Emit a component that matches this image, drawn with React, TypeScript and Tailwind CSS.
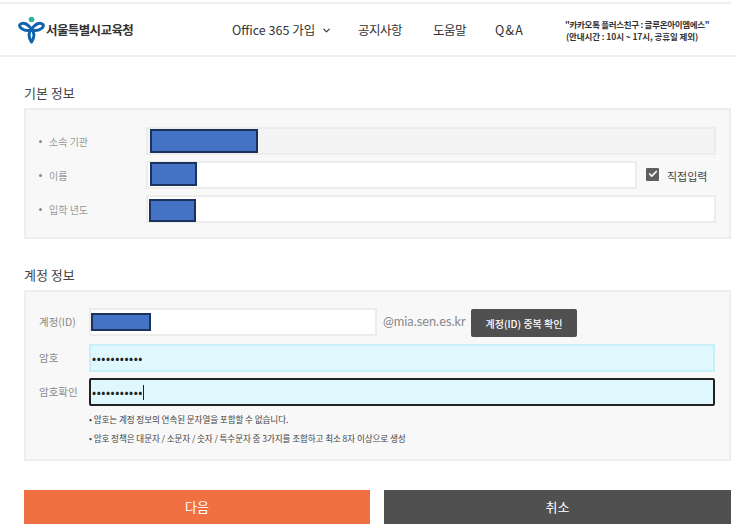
import { ChevronDown, Check } from 'lucide-react';

const KR = "font-['Noto_Sans_CJK_KR','Noto_Sans',sans-serif]";

const Redact = ({ className }: { className: string }) => (
  <div className={`bg-[#4472c4] border-2 border-[#1a325e] ${className}`}></div>
);

const Logo = () => (
  <svg width="27" height="28" viewBox="0 0 27 28" fill="none">
    <circle cx="13.5" cy="3.5" r="2.8" fill="#2bb5a0" />
    <path
      d="M2 8.5C5 5.5 10 8 13.5 13C17 8 22 5.5 25 8.5C26.5 11 22 15 16 14.5M13.5 13C10 16.5 10.5 22 13.5 26C16.5 22 17 16.5 13.5 13M2 8.5C0.5 11 5 15 11 14.5"
      stroke="#0f62ac"
      strokeWidth="3"
      strokeLinecap="round"
      strokeLinejoin="round"
    />
  </svg>
);

const BasicRow = ({ label, children }: { label: string; children: React.ReactNode }) => (
  <div className="flex items-center">
    <div className="w-[120px] pl-[13px] flex items-center text-[10px] text-[#999]">
      <span className="w-[3px] h-[3px] rounded-full bg-[#888] mr-[7px]"></span>
      {label}
    </div>
    {children}
  </div>
);

export default function App() {
  return (
    <div className={`w-[737px] h-[532px] bg-white overflow-hidden pt-[2px] ${KR}`}>
      <div className="h-[2px] bg-[#eeeeee] mr-[6px]"></div>

      <header className="h-[52px] mt-[1px] border-b-2 border-[#eeeeee] flex items-center">
        <div className="w-[232px] pl-[18px] flex items-center gap-[1px]">
          <Logo />
          <span className="text-[12.5px] font-bold text-[#333] tracking-[-0.6px] whitespace-nowrap">서울특별시교육청</span>
        </div>
        <nav className="flex items-center text-[12.5px] text-[#333] whitespace-nowrap">
          <span className="flex items-center w-[126px]">
            Office 365 가입
            <ChevronDown className="w-[11px] h-[11px] ml-[6px]" strokeWidth={2.5} />
          </span>
          <span className="w-[75px] tracking-[-0.5px]">공지사항</span>
          <span className="w-[62px] tracking-[-0.5px]">도움말</span>
          <span className="w-[70px] tracking-[1.2px]">Q&amp;A</span>
        </nav>
        <div className="text-[8.5px] leading-[12px] font-bold text-[#333] tracking-[-0.3px] whitespace-nowrap">
          <div>"카카오톡 플러스친구 : 글루온아이엠에스"</div>
          <div className="pl-[1px] tracking-[-0.1px]">(안내시간 : 10시 ~ 17시, 공휴일 제외)</div>
        </div>
      </header>

      <main className="pl-[24px] pr-[6px]">
        <h2 className="mt-[27px] h-[18px] leading-[18px] text-[13px] text-[#444]">기본 정보</h2>
        <section className="mt-[6px] h-[131px] border-2 border-[#eeeeee] bg-[#f8f8f8] pt-[17px] pr-[13px] flex flex-col gap-[6px]">
          <BasicRow label="소속 기관">
            <div className="w-[570px] h-[28px] border-2 border-[#ececec] bg-[#f4f4f4] flex items-center pl-[2px]">
              <Redact className="w-[108px] h-[24px]" />
            </div>
          </BasicRow>
          <BasicRow label="이름">
            <div className="w-[491px] h-[28px] border-2 border-[#ececec] bg-white flex items-center pl-[2px]">
              <Redact className="w-[47px] h-[24px] mb-[2px]" />
            </div>
            <span className="ml-[9px] mb-[2px] w-[13px] h-[13px] rounded-[1px] bg-[#5f5f5f] flex items-center justify-center">
              <Check className="w-[10px] h-[10px] text-white" strokeWidth={4} />
            </span>
            <span className="ml-[8px] mt-[2px] text-[11px] text-[#444] whitespace-nowrap">직접입력</span>
          </BasicRow>
          <BasicRow label="입학 년도">
            <div className="w-[570px] h-[28px] border-2 border-[#ececec] bg-white flex items-center pl-[1px]">
              <Redact className="w-[47px] h-[23px] mt-[3px]" />
            </div>
          </BasicRow>
        </section>

        <h2 className="mt-[27px] h-[18px] leading-[18px] text-[13px] text-[#444]">계정 정보</h2>
        <section className="mt-[6px] h-[171px] border-2 border-[#eeeeee] bg-[#f8f8f8] pt-[16px] pl-[13px] flex flex-col">
          <div className="flex items-center h-[28px]">
            <span className="w-[50px] text-[10.5px] text-[#888] whitespace-nowrap">계정(ID)</span>
            <div className="w-[288px] h-[28px] border-2 border-[#ececec] bg-white flex items-center">
              <Redact className="w-[60px] h-[18px]" />
            </div>
            <span className="ml-[6px] w-[88px] text-[12.8px] text-[#888] font-['Lato',sans-serif] whitespace-nowrap">@mia.sen.es.kr</span>
            <button className="w-[106px] h-[28px] mt-[2px] rounded-[2px] bg-[#505050] text-white text-[10px] font-medium whitespace-nowrap">
              계정(ID) 중복 확인
            </button>
          </div>
          <div className="flex items-center h-[28px] mt-[8px]">
            <span className="w-[50px] text-[10.5px] text-[#888]">암호</span>
            <div className="w-[626px] h-[28px] border-2 border-[#c8eef7] bg-[#dff8fe] flex items-center pl-[1px] text-[12px] tracking-[0.55px] text-[#222]">
              •••••••••••
            </div>
          </div>
          <div className="flex items-center h-[28px] mt-[6px]">
            <span className="w-[50px] text-[10.5px] text-[#888]">암호확인</span>
            <div className="w-[626px] h-[28px] border-2 border-[#222] rounded-[2px] bg-[#dff8fe] flex items-center pl-[1px] text-[12px] tracking-[0.55px] text-[#222]">
              •••••••••••
              <span className="w-[1px] h-[15px] bg-[#222]"></span>
            </div>
          </div>
          <ul className="ml-[50px] mt-[4px] text-[8.6px] text-[#444] tracking-[-0.1px] whitespace-nowrap">
            <li className="h-[19px] leading-[19px]">• 암호는 계정 정보의 연속된 문자열을 포함할 수 없습니다.</li>
            <li className="h-[19px] leading-[19px]">• 암호 정책은 대문자 / 소문자 / 숫자 / 특수문자 중 3가지를 조합하고 최소 8자 이상으로 생성</li>
          </ul>
        </section>

        <div className="mt-[29px] flex gap-[14px]">
          <button className="w-[346px] h-[34px] bg-[#f07042] text-white text-[13px]">다음</button>
          <button className="w-[347px] h-[34px] bg-[#505050] text-white text-[13px]">취소</button>
        </div>
      </main>
    </div>
  );
}
